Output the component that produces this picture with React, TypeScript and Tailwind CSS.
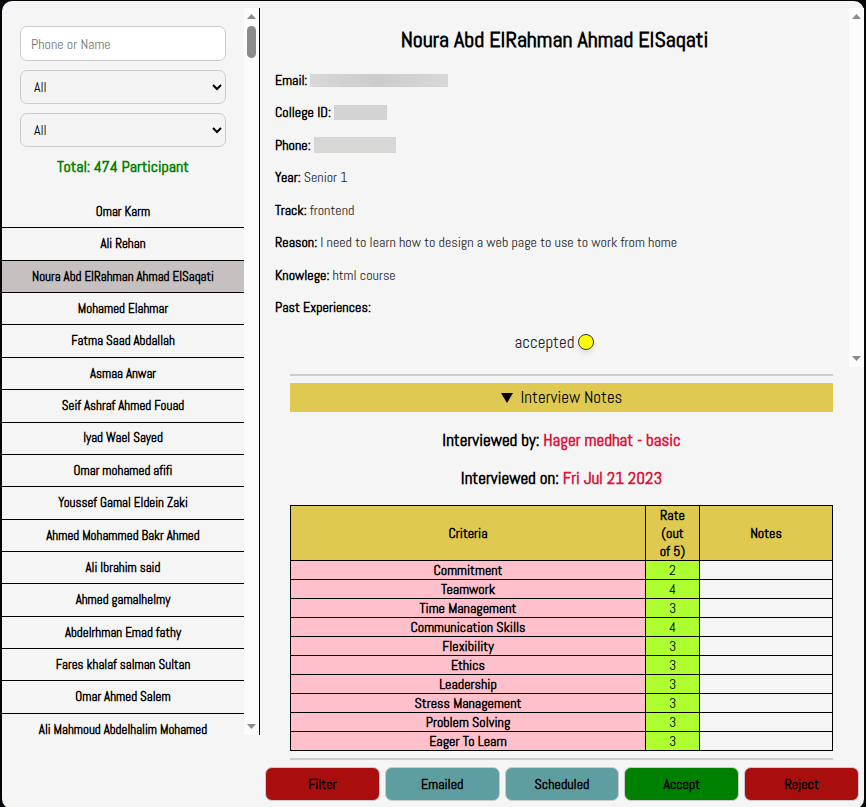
import type { ReactNode } from 'react';

const participants = [
  'Omar Karm',
  'Ali Rehan',
  'Noura Abd ElRahman Ahmad ElSaqati',
  'Mohamed Elahmar',
  'Fatma Saad Abdallah',
  'Asmaa Anwar',
  'Seif Ashraf Ahmed Fouad',
  'Iyad Wael Sayed',
  'Omar mohamed afifi',
  'Youssef Gamal Eldein Zaki',
  'Ahmed Mohammed Bakr Ahmed',
  'Ali Ibrahim said',
  'Ahmed gamalhelmy',
  'Abdelrhman Emad fathy',
  'Fares khalaf salman Sultan',
  'Omar Ahmed Salem',
  'Ali Mahmoud Abdelhalim Mohamed',
];
const selected = 2;

const criteria: [string, number][] = [
  ['Commitment', 2],
  ['Teamwork', 4],
  ['Time Management', 3],
  ['Communication Skills', 4],
  ['Flexibility', 3],
  ['Ethics', 3],
  ['Leadership', 3],
  ['Stress Management', 3],
  ['Problem Solving', 3],
  ['Eager To Learn', 3],
];

const actions = [
  { label: 'Filter', color: 'bg-[#a90e0e]' },
  { label: 'Emailed', color: 'bg-[#5f9ea0]' },
  { label: 'Scheduled', color: 'bg-[#5f9ea0]' },
  { label: 'Accept', color: 'bg-[#008000]' },
  { label: 'Reject', color: 'bg-[#a90e0e]' },
];

function ScrollTrack({ thumb = false }: { thumb?: boolean }) {
  return (
    <div aria-hidden="true" className="flex w-[15px] shrink-0 flex-col items-center bg-[#fcfcfc] pt-1.5 pb-1.5">
      <svg width="9" height="5" viewBox="0 0 9 5" className="shrink-0">
        <path d="M4.5 0 9 5H0z" fill="#8b8b8b" />
      </svg>
      {thumb && <div className="mt-[7px] h-8 w-[9px] rounded-full bg-[#8b8b8b]" />}
      <svg width="9" height="5" viewBox="0 0 9 5" className="mt-auto shrink-0">
        <path d="M0 0h9L4.5 5z" fill="#8b8b8b" />
      </svg>
    </div>
  );
}

function Field({ label, children }: { label: string; children?: ReactNode }) {
  return (
    <p className="flex flex-1 items-center gap-[3px] text-[#222]">
      <span className="font-bold text-black">{label}:</span>
      {children}
    </p>
  );
}

function FilterSelect({ label }: { label: string }) {
  return (
    <select
      aria-label={label}
      className="h-[34px] w-full rounded-[7px] border border-[#ccc] bg-[#f4f4f4] pl-[9px] text-[14px] text-black"
    >
      <option>All</option>
    </select>
  );
}

function Sidebar() {
  return (
    <aside className="flex h-[727px] w-[258px] shrink-0 border-r border-black">
      <div className="min-w-0 flex-1 overflow-hidden">
        <div className="flex flex-col gap-[9px] px-[18px] pt-[18px]">
          <input
            type="text"
            aria-label="Phone or Name"
            placeholder="Phone or Name"
            className="h-[35px] w-full rounded-[7px] border border-[#ccc] bg-white px-2.5 text-[14px] placeholder:text-[#757575]"
          />
          <FilterSelect label="Track" />
          <FilterSelect label="Status" />
        </div>
        <h2 className="mt-2.5 text-center text-[16px] leading-5 font-bold text-[#008000]">Total: 474 Participant</h2>
        <ul className="mt-[19px] flex h-[550px] flex-col text-center text-[13px] font-bold">
          {participants.map((name, i) => (
            <li
              key={name}
              className={`flex flex-1 items-center justify-center border-b border-black ${i === selected ? 'bg-[#c7c0c0]' : ''}`}
            >
              {name}
            </li>
          ))}
        </ul>
      </div>
      <ScrollTrack thumb />
    </aside>
  );
}

function Details() {
  return (
    <section className="flex h-[359px]">
      <div className="flex min-w-0 flex-1 flex-col">
        <h1 className="mt-[15px] text-center text-[22px] leading-8 font-bold">Noura Abd ElRahman Ahmad ElSaqati</h1>
        <div className="mt-[9px] flex h-[260px] flex-col pl-[15px] text-[14px]">
          <Field label="Email">
            <span className="h-[13px] w-[138px] bg-linear-to-r from-[#d8d8d8] via-[#cccccc] to-[#d8d8d8]" />
          </Field>
          <Field label="College ID">
            <span className="h-[15px] w-[53px] bg-[#d3d3d4]" />
          </Field>
          <Field label="Phone">
            <span className="h-4 w-[82px] bg-[#d7d7d6]" />
          </Field>
          <Field label="Year">Senior 1</Field>
          <Field label="Track">frontend</Field>
          <Field label="Reason">I need to learn how to design a web page to use to work from home</Field>
          <Field label="Knowlege">html course</Field>
          <Field label="Past Experiences" />
        </div>
        <p className="mt-2 flex items-center justify-center gap-1 text-[17px] leading-5 text-[#222]">
          accepted
          <span className="size-4 rounded-full border border-[#333] bg-[#ff0] shadow-md" />
        </p>
      </div>
      <ScrollTrack />
    </section>
  );
}

function InterviewNotes() {
  return (
    <section className="pr-[31px] pl-[30px]">
      <hr className="mt-[7px] border-t-2 border-[#ccc]" />
      <details open className="mt-[7px] text-center">
        <summary className="flex h-[29px] list-none items-center justify-center gap-2 bg-[#dfc950] text-[17px]">
          <svg width="12" height="10" viewBox="0 0 12 10">
            <path d="M0 0h12L6 10z" fill="#000" />
          </svg>
          Interview Notes
        </summary>
        <p className="mt-[18px] text-[17px] leading-5 font-bold">
          Interviewed by: <span className="text-[#dc143c]">Hager medhat - basic</span>
        </p>
        <p className="mt-[18px] text-[17px] leading-5 font-bold">
          Interviewed on: <span className="text-[#dc143c]">Fri Jul 21 2023</span>
        </p>
        <table className="mt-[17px] w-full border-collapse text-[14px] leading-[18px]">
          <thead>
            <tr className="bg-[#dfc950]">
              <th className="border border-black p-0">Criteria</th>
              <th className="w-[54px] border border-black px-2.5 py-0">Rate (out of 5)</th>
              <th className="w-[133px] border border-black p-0">Notes</th>
            </tr>
          </thead>
          <tbody>
            {criteria.map(([name, rate]) => (
              <tr key={name}>
                <th scope="row" className="border border-black bg-[#ffc0cb] p-0">
                  {name}
                </th>
                <td className="border border-black bg-[#adff2f] p-0">{rate}</td>
                <td className="border border-black p-0" />
              </tr>
            ))}
          </tbody>
        </table>
      </details>
      <hr className="mt-[7px] border-t-2 border-[#ccc]" />
    </section>
  );
}

export default function App() {
  return (
    <div className="h-screen overflow-hidden bg-[#06060a] px-0.5 pt-px font-[Abel,'Roboto_Condensed',sans-serif] text-black">
      <div className="flex rounded-[10px] bg-[#f5f5f5] pt-[7px] pb-2">
        <Sidebar />
        <main className="min-w-0 flex-1">
          <Details />
          <InterviewNotes />
          <div className="mt-[7px] flex gap-[5px] px-[5px]">
            {actions.map(({ label, color }) => (
              <button
                key={label}
                type="button"
                className={`h-[34px] flex-1 rounded-[7px] border border-[#ccc] text-[14px] font-bold ${color}`}
              >
                {label}
              </button>
            ))}
          </div>
        </main>
      </div>
    </div>
  );
}
